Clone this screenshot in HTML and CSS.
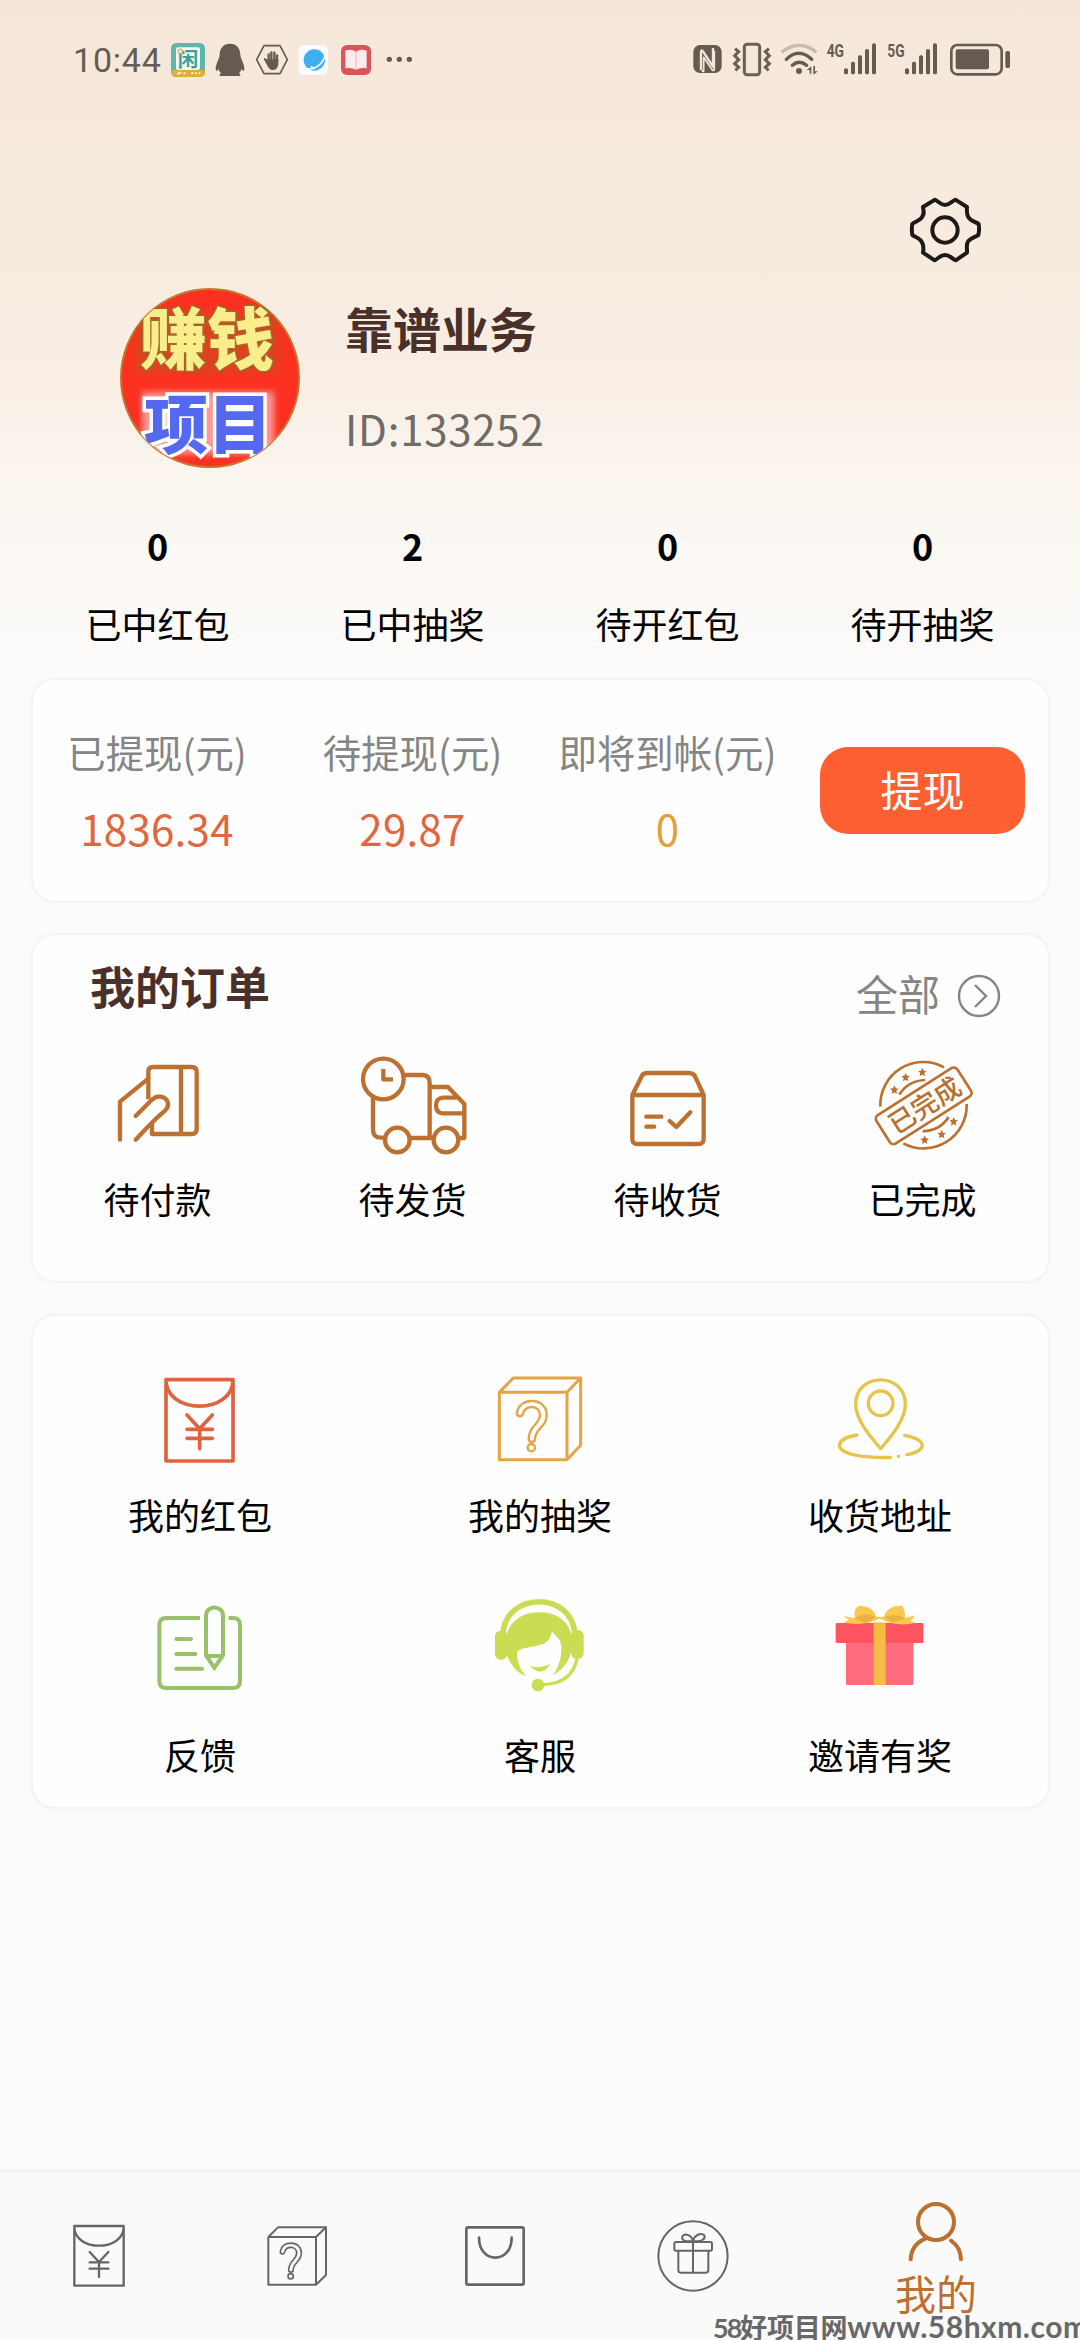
FILE: index.html
```html
<!DOCTYPE html>
<html lang="zh-CN">
<head>
<meta charset="utf-8">
<title>我的</title>
<link rel="stylesheet" href="styles.css">
</head>
<body>
<div class="page">
  <header class="status">
    <div class="status-left">
      <span class="clock">10:44</span>
      <svg width="40" height="40" viewBox="360 60 120 120">
        <rect x="363" y="69" width="102" height="102" rx="16" fill="#5fb5ac"/>
        <path d="M363 150h102v5q0 16-16 16h-70q-16 0-16-16z" fill="#dcae3c"/>
        <rect x="378" y="82" width="72" height="68" rx="6" fill="#f4f8f3"/>
        <text x="414" y="141" class="app-glyph">闲</text>
        <circle cx="391" cy="94" r="7" fill="#f7e6c8" stroke="#d79a5a" stroke-width="3"/>
        <path d="M382 162l12-5M400 160h6M424 160h7M436 160h5M446 160h5" stroke="#fff4d0" stroke-width="6"/>
      </svg>
      <svg width="40" height="40" viewBox="480 60 120 120" fill="#665b52">
        <path d="M540 71c20 0 31 14 31 34 0 9 12 27 12 41 0 8-4 9-9 1-1 6-3 9-7 13 5 3 5 7 3 8h-60c-2-1-2-5 3-8-4-4-6-7-7-13-5 8-9 7-9-1 0-14 12-32 12-41 0-20 11-34 31-34z"/>
      </svg>
      <svg width="44" height="40" viewBox="600 60 132 120">
        <path d="M642 77h48l22 42-22 42h-48l-22-42z" fill="none" stroke="#665b52" stroke-width="5" stroke-linejoin="round"/>
        <path d="M653 128l-8-10M656 124v-21M664 122V97M673 122V98M681 125v-19" fill="none" stroke="#665b52" stroke-width="7" stroke-linecap="round"/>
        <path d="M652 118h33v14q-2 17-15 18-11 0-16-10l-8-14z" fill="#665b52"/>
      </svg>
      <svg width="42" height="40" viewBox="732 60 126 120">
        <rect x="746" y="75" width="88" height="90" rx="18" fill="#f8fbff"/>
        <circle cx="793" cy="120" r="32" fill="#42aef2"/>
        <path d="M766 146q44 6 60-40M783 139l10 9" fill="none" stroke="#f8fbff" stroke-width="5"/>
      </svg>
      <svg width="40" height="40" viewBox="858 60 120 120">
        <rect x="873" y="75" width="90" height="90" rx="18" fill="#d9555b"/>
        <path d="M886 92q18-6 31 3 14-9 33-3v53q-18-4-32 4-14-8-32-4z" fill="#fdeaec"/>
        <path d="M918 96v52" stroke="#efb5bb" stroke-width="3"/>
      </svg>
      <svg width="40" height="40" viewBox="978 60 120 120" fill="#665b52">
        <circle cx="1018" cy="118" r="8"/><circle cx="1048" cy="118" r="8"/><circle cx="1078" cy="118" r="8"/>
      </svg>
    </div>
    <div class="status-right">
      <svg width="37" height="40" viewBox="60 60 111 120">
        <rect x="70" y="75" width="85" height="84" rx="20" fill="#665b52"/>
        <path d="M93 150V96q0-8 6-2l30 46V84" fill="none" stroke="#f5e7d8" stroke-width="7" stroke-linejoin="round"/>
        <path d="M97 150q0 6 4 4V112l26 38q6 4 6-4V92" fill="none" stroke="#f5e7d8" stroke-width="5" stroke-linejoin="round"/>
      </svg>
      <svg width="50" height="40" viewBox="171 60 150 120" fill="none" stroke="#6b6151">
        <rect x="223" y="73" width="46" height="91" rx="8" stroke-width="9"/>
        <path d="M195 86l11 9-12 12 12 12-12 12 12 11-10 9M297 86l-11 9 12 12-12 12 12 12-12 11 10 9" stroke-width="9"/>
      </svg>
      <svg width="46" height="40" viewBox="321 60 138 120" fill="none" stroke="#665b52" stroke-width="10">
        <path d="M335 97q52-42 104 0" stroke="#c9bcae"/>
        <path d="M349 118q37-36 76 0M367 136q20-18 43 0" stroke-linecap="round"/>
        <circle cx="387" cy="153" r="9" fill="#665b52" stroke="none"/>
        <path d="M410 150l14-11v22h-5v-11zM444 154l-14 10v-26h5v16z" fill="#665b52" stroke="none"/>
      </svg>
      <svg width="60" height="40" viewBox="459 60 180 120" fill="#665b52">
        <text x="470" y="110" class="net" textLength="52" lengthAdjust="spacingAndGlyphs">4G</text>
        <rect x="522" y="145" width="12" height="18" rx="5"/><rect x="543" y="125" width="12" height="38" rx="5"/><rect x="564" y="106" width="12" height="57" rx="5"/><rect x="585" y="87" width="12" height="76" rx="5"/><rect x="606" y="70" width="12" height="93" rx="5"/>
      </svg>
      <svg width="61" height="40" viewBox="639 60 183 120" fill="#665b52">
        <text x="652" y="110" class="net" textLength="52" lengthAdjust="spacingAndGlyphs">5G</text>
        <rect x="705" y="145" width="12" height="18" rx="5"/><rect x="726" y="125" width="12" height="38" rx="5"/><rect x="747" y="106" width="12" height="57" rx="5"/><rect x="768" y="87" width="12" height="76" rx="5"/><rect x="789" y="70" width="12" height="93" rx="5"/>
      </svg>
      <svg width="70" height="40" viewBox="822 60 210 120" fill="#665b52">
        <rect x="844" y="75" width="151" height="88" rx="18" fill="none" stroke="#665b52" stroke-width="8"/>
        <rect x="857" y="88" width="100" height="60" rx="6"/>
        <rect x="1006" y="93" width="14" height="51" rx="5"/>
      </svg>
    </div>
  </header>

  <div class="settings">
    <svg width="90" height="90" viewBox="0 0 270 270" fill="none" stroke="#1d1a18" stroke-width="12" stroke-linejoin="round">
      <path d="M105 44C119 51 122 60 135 60S152 51 166 44L201 66C199 88 203 97 211 103S228 112 236 117Q239 134 235 150C225 157 213 158 205 168S202 190 201 203L167 226C152 218 149 210 135 210S118 218 104 226L69 203C72 186 70 175 62 166S43 155 37 150Q34 132 37 117C45 110 56 109 65 98S71 81 69 66Z"/>
      <circle cx="135" cy="135" r="38"/>
    </svg>
  </div>

  <section class="profile">
    <svg class="avatar" width="180" height="180" viewBox="0 0 180 180">
      <defs>
        <filter id="glow" x="-20%" y="-20%" width="140%" height="140%"><feGaussianBlur stdDeviation="3"/></filter>
        <clipPath id="disc"><circle cx="90" cy="90" r="89"/></clipPath>
      </defs>
      <circle cx="90" cy="90" r="89" fill="#fb3020" stroke="#c8742c" stroke-width="2"/>
      <g clip-path="url(#disc)" text-anchor="middle">
        <rect x="14" y="24" width="146" height="62" fill="#c4521e" opacity=".5" filter="url(#glow)"/>
        <text x="87" y="76" class="art art-top">赚钱</text>
        <rect x="22" y="104" width="132" height="62" fill="#ffc4c8" opacity=".7" filter="url(#glow)"/>
        <text x="88" y="160" class="art art-bottom">项目</text>
      </g>
    </svg>
    <div class="who">
      <h1>靠谱业务</h1>
      <p>ID:133252</p>
    </div>
  </section>

  <section class="stats">
    <div><b>0</b><span>已中红包</span></div>
    <div><b>2</b><span>已中抽奖</span></div>
    <div><b>0</b><span>待开红包</span></div>
    <div><b>0</b><span>待开抽奖</span></div>
  </section>

  <section class="card wallet">
    <div class="sum"><span>已提现(元)</span><b>1836.34</b></div>
    <div class="sum"><span>待提现(元)</span><b>29.87</b></div>
    <div class="sum gold"><span>即将到帐(元)</span><b>0</b></div>
    <div class="action"><button>提现</button></div>
  </section>

  <section class="card orders">
    <div class="orders-head">
      <h2>我的订单</h2>
      <a class="all"><span>全部</span>
        <svg width="44" height="44" viewBox="0 0 44 44" fill="none" stroke="#858585" stroke-width="2.4"><circle cx="22" cy="22" r="20"/><path d="M18 11l11 11-11 11"/></svg>
      </a>
    </div>
    <div class="orders-row">
      <div class="item">
        <svg width="110" height="107" viewBox="126 369 330 321" class="brown">
          <path d="M262 508V425q0-14 14-14h116q15 0 15 15v171q0 15-15 15H273v-32M360 411v201"/>
          <path d="M262 446l-85 69v114M224 558l50-50c16-14 36-9 44 3 6 12 4 22-6 31-40 34-60 58-88 87" stroke-linecap="round"/>
        </svg>
        <span>待付款</span>
      </div>
      <div class="item">
        <svg width="110" height="107" viewBox="891 369 330 321" class="brown">
          <circle cx="967" cy="447" r="61"/><path d="M967 417v31h29"/>
          <path d="M1031 435h52q23 0 23 23v164M936 504v95q0 24 24 24h12M1049 624h68M1112 471h49l49 51v102h-15M1190 503h-44q-21 2-21 23 0 24 21 24h64"/>
          <circle cx="1009" cy="630" r="37"/><circle cx="1155" cy="630" r="37"/>
        </svg>
        <span>待发货</span>
      </div>
      <div class="item">
        <svg width="110" height="107" viewBox="156 369 330 321" class="brown">
          <path d="M214 495h214v131q0 16-16 16H230q-16 0-16-16zM214 495l29-58q5-8 15-8h126q11 0 17 8l27 58"/>
          <path d="M256 560h45M256 590h23M326 573l20 18 42-44" stroke-linecap="round"/>
        </svg>
        <span>待收货</span>
      </div>
      <div class="item">
        <svg width="110" height="107" viewBox="921 369 330 321" class="brown stamp">
          <path d="M958 530a129 129 0 0 1 191-118M1217 522a129 129 0 0 1-190 118"/>
          <path d="M1015 494q26-42 78-44M1085 604q52-2 78-43"/>
          <rect x="944" y="477" width="288" height="101" rx="13" transform="rotate(-32.5 1088 527.5)"/>
          <text x="1092" y="556" transform="rotate(-32.5 1090 528)" class="stamp-text">已完成</text>
          <g fill="#b9702f" stroke="none">
            <path d="M0-13 4-4 13-3 6 3 8 13 0 8-8 13-6 3-13-3-4-4z" transform="translate(1000 479)"/>
            <path d="M0-13 4-4 13-3 6 3 8 13 0 8-8 13-6 3-13-3-4-4z" transform="translate(1034 441)"/>
            <path d="M0-13 4-4 13-3 6 3 8 13 0 8-8 13-6 3-13-3-4-4z" transform="translate(1084 426)"/>
            <path d="M0-13 4-4 13-3 6 3 8 13 0 8-8 13-6 3-13-3-4-4z" transform="translate(1091 629)"/>
            <path d="M0-13 4-4 13-3 6 3 8 13 0 8-8 13-6 3-13-3-4-4z" transform="translate(1142 612)"/>
            <path d="M0-13 4-4 13-3 6 3 8 13 0 8-8 13-6 3-13-3-4-4z" transform="translate(1178 574)"/>
          </g>
        </svg>
        <span>已完成</span>
      </div>
    </div>
  </section>

  <section class="card services">
    <div class="item">
      <svg width="100" height="100" viewBox="150 90 300 300" fill="none" stroke="#e0633f" stroke-width="11" stroke-linejoin="round" stroke-linecap="round">
        <path d="M198 119h201v244H198zM198 119c0 106 201 106 201 0"/>
        <path d="M261 225l38 41 38-41M261 268h76M261 295h76M299 268v58"/>
      </svg>
      <span>我的红包</span>
    </div>
    <div class="item">
      <svg width="100" height="100" viewBox="1170 90 300 300" fill="none" stroke="#e2a445" stroke-width="9" stroke-linejoin="round">
        <path d="M1198 157h203v202h-203zM1198 157l42-43h202v202l-41 43M1401 157l41-43"/>
        <path d="M1296 183c27 0 44 18 44 42 0 38-35 39-35 73 0 10-19 10-19 0 0-41 34-46 34-73 0-14-10-24-24-24-15 0-24 9-27 20-4 12-20 9-18-4 4-20 20-34 45-34z" stroke-width="7"/>
        <circle cx="1294" cy="323" r="11" stroke-width="7"/>
      </svg>
      <span>我的抽奖</span>
    </div>
    <div class="item">
      <svg width="100" height="100" viewBox="150 90 300 300" fill="none" stroke="#e8c34a" stroke-width="10" stroke-linejoin="round" stroke-linecap="round">
        <path d="M302 326c-32-38-75-86-75-133 0-98 149-98 149 0 0 47-42 95-74 133z"/>
        <circle cx="302" cy="190" r="37"/>
        <path d="M231 285c-60 10-80 46 0 61q42 8 101 6M374 286c66 13 72 44 7 58M355 349h1"/>
      </svg>
      <span>收货地址</span>
    </div>
    <div class="item">
      <svg width="100" height="100" viewBox="150 75 300 300" fill="none" stroke="#98c16a" stroke-width="12">
        <path d="M300 144H199q-21 0-21 21v168q0 21 21 21h200q21 0 21-21V165q0-21-21-21h-13"/>
        <path d="M229 207h44M229 252h57M229 296h77" stroke-linecap="round"/>
        <path d="M318 256V137c0-33 51-33 51 0v119l-26 37zM320 258h47"/>
      </svg>
      <span>反馈</span>
    </div>
    <div class="item">
      <svg width="100" height="100" viewBox="1170 75 300 300" fill="#c9dc52">
        <path d="M1209 190C1218 66 1412 62 1424 188" fill="none" stroke="#c9dc52" stroke-width="17"/>
        <rect x="1185" y="182" width="37" height="87" rx="17"/><rect x="1413" y="180" width="38" height="87" rx="17"/>
        <path d="M1216 235c-6-55 28-108 102-108 73 0 106 50 97 108-5 36-23 62-56 81 26-36 30-84 20-106-10-14-22-23-23-28-3 22-14 36-30 41-38 12-58 8-75 23 0 34 13 58 28 73-33-11-58-48-63-84z"/>
        <path d="M1289 287q33 12 62-5-25 42-62 5z"/>
        <path d="M1432 262q-14 80-104 82" fill="none" stroke="#c9dc52" stroke-width="10"/>
        <circle cx="1314" cy="345" r="19"/>
      </svg>
      <span>客服</span>
    </div>
    <div class="item">
      <svg width="100" height="100" viewBox="150 765 300 300">
        <path d="M198 905h202v126q0 4-4 4H202q-4 0-4-4z" fill="#ff6b7c"/>
        <rect x="167" y="849" width="263" height="60" rx="4" fill="#fd545f"/>
        <path d="M281 847h36v188h-36z" fill="#f6bd45"/>
        <path d="M191 828l33 7c-2-26 4-38 18-38 28 2 43 16 46 33h24c8-25 28-34 54-33 8 8 9 24 9 37l31-8-14 17 14 6c-40 9-80 3-107-14-30 17-72 22-109 12l17-7z" fill="#fdc64c"/>
        <path d="M224 836q25-22 64-5l-28 18zM375 836q-25-20-64-4l30 15z" fill="#eab143"/>
      </svg>
      <span>邀请有奖</span>
    </div>
  </section>

  <nav class="tabs">
    <a>
      <svg width="80" height="80" viewBox="57 108 240 240" fill="none" stroke="#666" stroke-width="7" stroke-linejoin="round" stroke-linecap="round">
        <path d="M103 138h148v179H103zM103 140c0 76 148 76 148 0M149 216l28 30 28-30M149 247h56M149 266h56M177 247v44"/>
      </svg>
    </a>
    <a>
      <svg width="80" height="80" viewBox="651 108 240 240" fill="none" stroke="#666" stroke-width="6" stroke-linejoin="round">
        <path d="M685 171h143v143H685zM685 171l29-29h144v143l-30 29M828 171l30-29"/>
        <path d="M1296 183c27 0 44 18 44 42 0 38-35 39-35 73 0 10-19 10-19 0 0-41 34-46 34-73 0-14-10-24-24-24-15 0-24 9-27 20-4 12-20 9-18-4 4-20 20-34 45-34z" transform="translate(-164.5 60) scale(.708)" stroke-width="7"/>
        <circle cx="752" cy="289" r="8" stroke-width="5"/>
      </svg>
    </a>
    <a>
      <svg width="80" height="80" viewBox="1245 108 240 240" fill="none" stroke="#666" stroke-width="8" stroke-linecap="round">
        <rect x="1279" y="142" width="172" height="172" rx="5"/><path d="M1317 173c0 80 98 80 98 0"/>
      </svg>
    </a>
    <a>
      <svg width="80" height="80" viewBox="159 198 240 240" fill="none" stroke="#666" stroke-width="6">
        <circle cx="279" cy="318" r="104"/>
        <rect x="223" y="276" width="113" height="26" rx="5"/><path d="M235 302v59q0 7 7 7h76q7 0 7-7v-59M279 276v92M279 272c-24 6-38-4-31-14 8-9 27-3 31 14 4-17 24-25 34-16 5 10-10 22-34 16"/>
      </svg>
    </a>
    <a class="current">
      <svg width="80" height="65" viewBox="888 150 240 195" fill="none" stroke="#bb7030" stroke-width="12" stroke-linecap="round">
        <circle cx="1008" cy="216" r="54"/><path d="M976 266q-42 18-44 62M1053 272q29 20 30 56"/>
      </svg>
      <span>我的</span>
    </a>
  </nav>
  <div class="watermark">58<span class="wm-cn">好项目网</span><span class="wm-url">www.58hxm.com</span></div>
</div>
</body>
</html>
```
FILE: styles.css
```css
* { box-sizing: border-box; }
body, h1, h2, p { margin: 0; }
body {
  font-family: "Noto Sans CJK SC", "Noto Sans", sans-serif;
  color: #000;
  background: #fbfbfb;
}
svg { display: block; flex: none; overflow: visible; }

.page {
  position: relative;
  display: flex;
  flex-direction: column;
  width: 1080px;
  height: 2340px;
  overflow: hidden;
  background: linear-gradient(#f5e7d8 0, #f7eadf 200px, #f9eee4 380px, #faf5ee 470px, #fcf9f5 580px, #fbfbfb 680px);
}

.status {
  display: flex;
  justify-content: space-between;
  align-items: center;
  height: 120px;
  padding: 0 66px 0 73px;
}
.status-left, .status-right { display: flex; align-items: center; }
.clock {
  width: 97px;
  font: 34px/40px Roboto, sans-serif;
  letter-spacing: 0.8px;
  color: #665b52;
}
.app-glyph { font-size: 62px; font-weight: 700; fill: #3f9e97; text-anchor: middle; }
.net { font: 700 54px Roboto, sans-serif; }

.settings { display: flex; justify-content: flex-end; padding: 65px 90px 0 0; height: 168px; }

.profile { display: flex; gap: 45px; height: 180px; padding-left: 120px; }
.who { padding-top: 9px; }
.who h1 { font-size: 48px; line-height: 60px; color: #4a302a; }
.who p { margin-top: 46px; font-size: 42px; line-height: 50px; letter-spacing: 0.75px; color: #6f6b67; }
.art { font-weight: 900; font-size: 67px; paint-order: stroke; }
.art-top { fill: #f9ee8b; stroke: #a8652a; stroke-width: 3px; }
.art-bottom { font-size: 64px; fill: #5468f0; stroke: #fff; stroke-width: 7px; }

.stats { display: grid; grid-template-columns: repeat(4, 255px); padding: 57px 30px 35px; text-align: center; }
.stats div { display: flex; flex-direction: column; gap: 36px; }
.stats b { font-size: 36px; line-height: 40px; }
.stats span { font-size: 36px; line-height: 44px; }

.card {
  margin: 0 32px 0 33px;
  background: #fefefe;
  border-radius: 22px;
  box-shadow: 0 0 4px 1px rgba(0, 0, 0, 0.06);
}

.wallet { display: grid; grid-template-columns: 252px 255px 255px 1fr; height: 221px; }
.sum { display: flex; flex-direction: column; align-items: center; gap: 28px; padding-top: 47px; }
.sum:first-child { margin-left: -4px; }
.sum span { font-size: 38.4px; line-height: 48px; color: #858585; white-space: nowrap; }
.sum b { font-size: 42px; line-height: 50px; font-weight: 400; letter-spacing: 0.3px; color: #e1663e; }
.sum.gold b { color: #e2a038; }
.action { padding: 67px 0 0 25px; }
.action button {
  width: 205px;
  height: 87px;
  border: 0;
  border-radius: 28px;
  padding: 0 0 3px;
  background: #fd5f31;
  color: #fff;
  font: 42px/80px "Noto Sans CJK SC", sans-serif;
}

.orders { height: 346px; margin-top: 34px; }
.orders-head { display: flex; justify-content: space-between; height: 118px; padding: 21px 47px 0 57px; }
.orders-head h2 { font-size: 45px; line-height: 60px; color: #4a302a; }
.all { display: flex; align-items: center; gap: 17px; height: 80px; font-size: 42px; color: #858585; }
.all span { line-height: 50px; padding-bottom: 6px; }
.orders-row { display: grid; grid-template-columns: repeat(4, 255px); margin-left: -3px; }
.item { display: flex; flex-direction: column; align-items: center; }
.item span { font-size: 36px; line-height: 44px; }
.orders .item { gap: 16px; }
.brown { fill: none; stroke: #bd7130; stroke-width: 13px; stroke-linejoin: round; }
.stamp { stroke-width: 8px; }
.stamp-text { font-size: 80px; font-weight: 500; fill: #b9702f; stroke: none; text-anchor: middle; }

.services {
  display: grid;
  grid-template-columns: repeat(3, 340px);
  grid-template-rows: 225px 225px;
  height: 491px;
  margin-top: 35px;
  padding-top: 54px;
}
.services .item { margin: 0 3px 0 -3px; gap: 22px; }
.services .item:nth-child(n+4) { gap: 37px; }

.tabs {
  display: grid;
  grid-template-columns: repeat(4, 198px) 288px;
  height: 168px;
  margin-top: auto;
  background: #fafafa;
  box-shadow: 0 -1px 3px rgba(0, 0, 0, 0.08);
}
.tabs a { display: flex; flex-direction: column; align-items: center; justify-content: center; }
.tabs .current { gap: 6px; font-size: 41px; line-height: 42px; color: #bb7030; }

.watermark {
  position: absolute;
  left: 713px;
  top: 2313px;
  font: 700 27px/27px Lato, "Noto Sans CJK SC", sans-serif;
  letter-spacing: -2px;
  white-space: nowrap;
  color: #686868;
}
.wm-cn { font-size: 27px; letter-spacing: -0.3px; }
.wm-url { font-size: 30px; letter-spacing: 0.5px; }
```
